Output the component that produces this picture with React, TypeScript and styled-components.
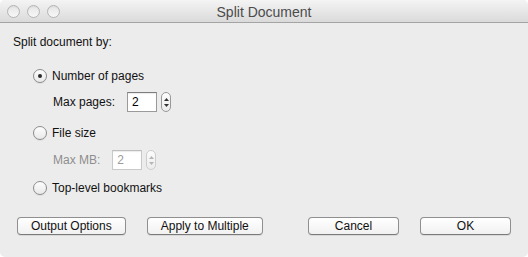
import React from "react";
import styled, { createGlobalStyle, css } from "styled-components";

const GlobalStyle = createGlobalStyle`
  html, body {
    margin: 0;
    padding: 0;
    background: #ffffff;
  }
  body {
    font-family: "Liberation Sans", Arial, sans-serif;
    font-size: 12px;
    color: #111;
  }
`;

const Window = styled.div`
  width: 528px;
  height: 257px;
  box-sizing: border-box;
  background: #ececec;
  border-radius: 5px;
  overflow: hidden;
  display: flex;
  flex-direction: column;
`;

const TitleBar = styled.div`
  height: 22px;
  flex: none;
  display: grid;
  grid-template-columns: 1fr auto 1fr;
  align-items: center;
  padding: 0 7px;
  background: linear-gradient(#f4f4f4, #dadada);
  border-bottom: 1px solid #a4a4a4;
`;

const Lights = styled.div`
  display: flex;
  gap: 7px;
`;

const Light = styled.span`
  width: 11px;
  height: 11px;
  border-radius: 50%;
  border: 1px solid #b4b4b4;
  background: linear-gradient(#e6e6e6, #f7f7f7);
  box-shadow: inset 0 1px 1px rgba(0, 0, 0, 0.06);
`;

const Title = styled.div`
  font-size: 14px;
  color: #4b4b4b;
  padding-top: 1px;
`;

const Body = styled.div`
  flex: 1;
  display: flex;
  flex-direction: column;
  padding: 11px 17px 0 13px;
`;

const Heading = styled.div`
  height: 16px;
  line-height: 16px;
`;

const Group = styled.div`
  display: flex;
  flex-direction: column;
  padding-left: 20px;
`;

const Row = styled.label<{ $top: number }>`
  display: flex;
  align-items: center;
  height: 20px;
  margin-top: ${(p) => p.$top}px;
  gap: 5px;
`;

const Radio = styled.span<{ $checked?: boolean }>`
  width: 12px;
  height: 12px;
  border-radius: 50%;
  border: 1px solid #8c8c8c;
  background: linear-gradient(#fdfdfd, #e9e9e9);
  box-shadow: 0 1px 0 rgba(0, 0, 0, 0.06);
  display: flex;
  align-items: center;
  justify-content: center;
  ${(p) =>
    p.$checked &&
    css`
      &::after {
        content: "";
        width: 4px;
        height: 4px;
        border-radius: 50%;
        background: #2a2a2a;
      }
    `}
`;

const SubRow = styled.div<{ $top: number; $disabled?: boolean }>`
  display: flex;
  align-items: center;
  height: 24px;
  margin-top: ${(p) => p.$top}px;
  padding-left: 20px;
  color: ${(p) => (p.$disabled ? "#8e8e8e" : "inherit")};
`;

const FieldLabel = styled.span`
  margin-right: 12px;
`;

const Field = styled.div<{ $disabled?: boolean }>`
  width: 30px;
  height: 20px;
  box-sizing: border-box;
  background: #fff;
  border: 1px solid ${(p) => (p.$disabled ? "#c9c9c9" : "#9a9a9a")};
  border-top-color: ${(p) => (p.$disabled ? "#bdbdbd" : "#7d7d7d")};
  box-shadow: inset 0 1px 1px rgba(0, 0, 0, 0.08);
  padding-left: 4px;
  line-height: 18px;
  color: ${(p) => (p.$disabled ? "#9b9b9b" : "#000")};
`;

const Stepper = styled.div<{ $disabled?: boolean }>`
  width: 10px;
  height: 20px;
  box-sizing: border-box;
  margin-left: 4px;
  border-radius: 5px;
  border: 1px solid ${(p) => (p.$disabled ? "#cdcdcd" : "#999")};
  background: linear-gradient(#fcfcfc, #ececec);
  display: flex;
  flex-direction: column;
  align-items: center;
  justify-content: center;
  gap: 3px;
  color: ${(p) => (p.$disabled ? "#b5b5b5" : "#333")};
`;

const Arrow = styled.svg`
  display: block;
`;

const ButtonBar = styled.div`
  display: flex;
  align-items: center;
  gap: 21px;
  margin-top: 19px;
  padding-left: 4px;
`;

const Spacer = styled.div`
  flex: 1;
`;

const Button = styled.button`
  font-family: "Liberation Sans", Arial, sans-serif;
  font-size: 12px;
  color: #111;
  height: 18px;
  min-width: 91px;
  padding: 0 13px;
  box-sizing: border-box;
  border: 1px solid #8f8f8f;
  border-bottom-color: #7a7a7a;
  border-radius: 4px;
  background: linear-gradient(#ffffff, #f1f1f1);
  box-shadow: 0 1px 0 rgba(0, 0, 0, 0.08);
  line-height: 16px;
  margin: 0;
`;

const StepArrows = () => (
  <>
    <Arrow width="5" height="3" viewBox="0 0 5 3">
      <path d="M2.5 0L5 3H0z" fill="currentColor" />
    </Arrow>
    <Arrow width="5" height="3" viewBox="0 0 5 3">
      <path d="M0 0h5L2.5 3z" fill="currentColor" />
    </Arrow>
  </>
);

export default function App() {
  return (
    <>
      <GlobalStyle />
      <Window>
        <TitleBar>
          <Lights>
            <Light />
            <Light />
            <Light />
          </Lights>
          <Title>Split Document</Title>
          <div />
        </TitleBar>
        <Body>
          <Heading>Split document by:</Heading>
          <Group>
            <Row $top={16}>
              <Radio $checked />
              Number of pages
            </Row>
            <SubRow $top={4}>
              <FieldLabel>Max pages:</FieldLabel>
              <Field>2</Field>
              <Stepper>
                <StepArrows />
              </Stepper>
            </SubRow>
            <Row $top={9}>
              <Radio />
              File size
            </Row>
            <SubRow $top={5} $disabled>
              <FieldLabel>Max MB:</FieldLabel>
              <Field $disabled>2</Field>
              <Stepper $disabled>
                <StepArrows />
              </Stepper>
            </SubRow>
            <Row $top={6}>
              <Radio />
              Top-level bookmarks
            </Row>
          </Group>
          <ButtonBar>
            <Button>Output Options</Button>
            <Button>Apply to Multiple</Button>
            <Spacer />
            <Button>Cancel</Button>
            <Button>OK</Button>
          </ButtonBar>
        </Body>
      </Window>
    </>
  );
}
